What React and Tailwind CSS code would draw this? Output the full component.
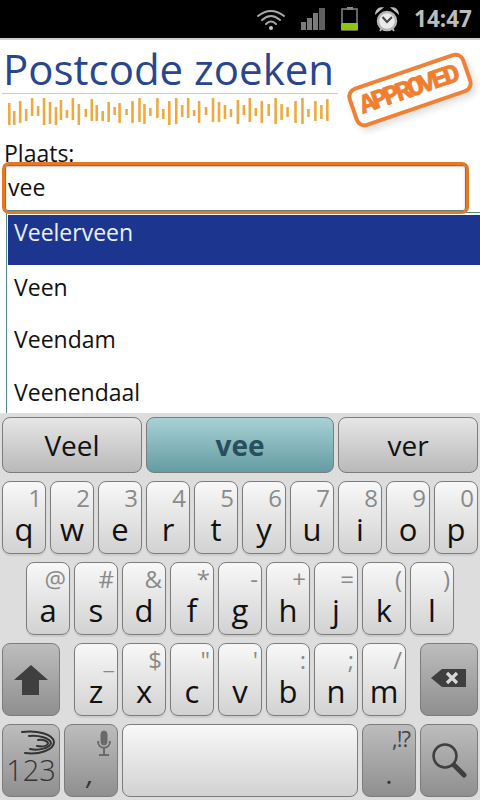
const FONT = { fontFamily: '"Open Sans","Noto Sans",sans-serif' };

const BARS = [
  [8,8,26],[13,16,18],[19,6,22],[25,14,12],[31,3,18],[37,11,10],[43,3,28],[49,7,22],[55,12,24],[60,5,20],[66,15,8],[72,3,22],[78,9,26],[85,14,8],[91,4,22],[96,10,16],[102,16,10],[108,7,20],[114,12,8],[119,8,20],[126,14,6],[132,6,22],[139,3,24],[144,9,20],[150,13,8],[157,3,20],[163,14,10],[169,6,26],[176,3,26],[182,10,12],[188,3,20],[194,15,6],[199,6,22],[206,12,8],[213,3,24],[219,7,20],[225,10,14],[231,14,8],[238,5,24],[244,10,10],[250,3,24],[256,13,8],[262,6,22],[269,9,12],[276,3,26],[282,9,16],[288,12,10],[296,6,22],[303,3,26],[309,14,8],[316,6,20],[322,10,14],[328,4,22],
];

function Barcode() {
  return (
    <svg width="330" height="28" viewBox="0 0 332 28" className="block">
      {BARS.map(([x, y, h], i) => (
        <rect key={i} x={x - 2} y={y - 2} width="2.6" height={h} fill="#efa93f" />
      ))}
    </svg>
  );
}

function StatusBar() {
  return (
    <div className="h-[40px] bg-black border-b-2 border-[#cfcfcf] flex items-center justify-end gap-[14px] pr-[8px] shrink-0">
      <svg width="30" height="24" viewBox="0 0 30 24" fill="none" stroke="#a9a9a9" strokeLinecap="round">
        <path d="M2 9 Q15 -1 28 9" strokeWidth="2" />
        <path d="M6 13 Q15 5 24 13" strokeWidth="2" />
        <path d="M10 17 Q15 12 20 17" strokeWidth="2" />
        <circle cx="15" cy="21" r="2" fill="#c8c8c8" stroke="none" />
      </svg>
      <svg width="26" height="24" viewBox="0 0 26 24" fill="#7b7b7b">
        <rect x="1" y="15" width="5" height="8" />
        <rect x="7" y="11" width="5" height="12" />
        <rect x="13" y="6" width="5" height="17" />
        <rect x="19" y="1" width="6" height="22" fill="#5f5f5f" />
      </svg>
      <svg width="20" height="26" viewBox="0 0 20 26">
        <rect x="7" y="1" width="6" height="3" fill="#8c8c8c" />
        <rect x="2" y="3" width="15" height="21" fill="none" stroke="#7d7d7d" strokeWidth="1.6" />
        <rect x="1" y="17" width="17" height="7" rx="1" fill="#8fc412" />
      </svg>
      <svg width="26" height="26" viewBox="0 0 26 26">
        <circle cx="13" cy="15" r="9" fill="#eaeaea" stroke="#b5b5b5" strokeWidth="2.5" />
        <path d="M8.5 11 L13 16 L18 11" fill="none" stroke="#444" strokeWidth="2" />
        <path d="M2 7 Q3 2 8 2 Z" fill="#bdbdbd" stroke="#bdbdbd" strokeWidth="1.5" />
        <path d="M24 7 Q23 2 18 2 Z" fill="#bdbdbd" stroke="#bdbdbd" strokeWidth="1.5" />
        <path d="M6 25 L8 22 M20 25 L18 22" stroke="#b5b5b5" strokeWidth="2" />
      </svg>
      <span className="text-[22.5px] leading-none font-bold text-[#bcbcbc]" style={FONT}>14:47</span>
    </div>
  );
}

function Header() {
  return (
    <div className="h-[98px] flex shrink-0 bg-white">
      <div className="w-[338px] pl-[3px] pt-[5px] shrink-0">
        <div className="text-[42px] leading-[48px] text-[#27468f] whitespace-nowrap" style={FONT}>
          Postcode zoeken
        </div>
        <div className="h-px bg-[#c5cadb] mb-[3px] -ml-[1px]" />
        <div className="-ml-[1px]"><Barcode /></div>
      </div>
      <div className="flex-1 flex items-center justify-center pt-[1px] pl-[2px]">
        <div className="w-[124px] h-[42px] -rotate-[19deg] border-[4px] border-[#ef8136] rounded-[10px] flex items-center justify-center text-[#ef7e2e] font-bold text-[27px] leading-none shadow-[2px_5px_6px_rgba(0,0,0,0.12)] [-webkit-text-stroke:0.7px_#ef7e2e]" style={{ fontFamily: '"Liberation Mono",monospace' }}>
          <span className="tracking-[-3.6px] pr-[4px]">APPROVED</span>
        </div>
      </div>
    </div>
  );
}

function Form() {
  const items = ['Veen', 'Veendam', 'Veenendaal'];
  return (
    <div className="flex-1 min-h-0 overflow-hidden bg-white" style={FONT}>
      <div className="text-[23px] leading-[32px] text-[#111] pl-[4px] h-[24px] -mt-[1px] mb-[1px]">Plaats:</div>
      <div className="relative z-10 ml-[2px] w-[467px] h-[52px] rounded-[7px] border-[3px] border-[#e8781f] bg-white">
        <div className="h-full border border-[#5f7f78] rounded-[3px] pl-[2px] flex items-center text-[23px] text-[#111] pb-[2px] shadow-[inset_0_1px_2px_rgba(0,0,0,0.25)]">
          vee
        </div>
      </div>
      <div className="-mt-[2px] ml-[6px] border-l border-t border-[#4d8a88] pt-[2px] pl-px">
        <div className="h-[50px] bg-[#1c368f] text-[#e8f0fb] text-[23px] pl-[6px] flex items-center pb-[15px]">Veelerveen</div>
        {items.map((t) => (
          <div key={t} className="h-[52.5px] text-[23px] text-[#111] pl-[6px] flex items-center pb-[9px]">{t}</div>
        ))}
      </div>
    </div>
  );
}

const KEY_BASE = 'rounded-[8px] border border-[#7c7c7c] shrink-0';
const LIGHT = 'bg-gradient-to-b from-[#f8f8f8] to-[#d2d2d2]';
const DARK = 'bg-gradient-to-b from-[#bdbdbd] to-[#8f8f8f]';

function Key({ letter, hint }) {
  return (
    <div className={`${KEY_BASE} ${LIGHT} w-[44px] h-[73px] flex flex-col shadow-[0_2px_1px_rgba(0,0,0,0.08)]`}>
      <div className="h-[30px] pr-[3px] pt-[1px] text-right text-[24px] leading-[29px] text-[#8a8a8a]">{hint}</div>
      <div className="text-center text-[31px] leading-[34px] text-[#111]">{letter}</div>
    </div>
  );
}

function Suggest({ children, active, w }) {
  return (
    <div className={`${KEY_BASE} h-[56px] flex items-center justify-center text-[28px] ${w} ${active ? 'bg-gradient-to-b from-[#a8d1d5] to-[#649ca3] border-[#5b8c92] text-[#274f5e] font-bold' : 'bg-gradient-to-b from-[#e6e6e6] to-[#b9b9b9] text-[#111]'}`}>
      {children}
    </div>
  );
}

function Row({ keys, hints }) {
  return keys.split('').map((k, i) => <Key key={k} letter={k} hint={hints[i]} />);
}

function Keyboard() {
  return (
    <div className="h-[387px] bg-[#dddddd] shrink-0 flex flex-col gap-[8px] px-[2px] pt-[4px]" style={FONT}>
      <div className="flex gap-[4px] h-[56px]">
        <Suggest w="w-[140px]">Veel</Suggest>
        <Suggest w="w-[188px]" active>vee</Suggest>
        <Suggest w="w-[140px]">ver</Suggest>
      </div>
      <div className="flex gap-[4px] h-[73px]">
        <Row keys="qwertyuiop" hints={['1','2','3','4','5','6','7','8','9','0']} />
      </div>
      <div className="flex gap-[4px] h-[73px] pl-[24px]">
        <Row keys="asdfghjkl" hints={['@','#','&','*','-','+','=','(',')']} />
      </div>
      <div className="flex gap-[4px] h-[73px]">
        <div className={`${KEY_BASE} ${DARK} w-[58px] h-[73px] mr-[10px] flex items-center justify-center`}>
          <svg width="36" height="32" viewBox="0 0 36 32"><path d="M18 1 L35 16 L26 16 L26 31 L9 31 L9 16 L1 16 Z" fill="#3f3f3f" /></svg>
        </div>
        <Row keys="zxcvbnm" hints={['_','$','"',"'",':',';','/']} />
        <div className={`${KEY_BASE} ${DARK} w-[58px] h-[73px] ml-[10px] flex items-start justify-center pt-[24px]`}>
          <svg width="36" height="20" viewBox="0 0 36 20">
            <path d="M0 10 L11 1 L35 1 L35 19 L11 19 Z" fill="#3f3f3f" />
            <path d="M16 5 L26 15 M26 5 L16 15" stroke="#d8d8d8" strokeWidth="3.2" />
          </svg>
        </div>
      </div>
      <div className="flex gap-[4px] h-[73px]">
        <div className={`${KEY_BASE} ${DARK} w-[58px] h-[73px] flex flex-col items-center pt-[5px]`}>
          <svg width="34" height="26" viewBox="0 0 34 26" fill="none" stroke="#333" strokeLinecap="round" className="ml-[13px]">
            <path d="M1 2 C16 0 32 4 33 12 C33 20 18 25 4 23" strokeWidth="2" />
            <path d="M8 6 C18 5 29 8 30 13 C29 18 18 21 9 19" strokeWidth="2" />
            <path d="M17 10 C22 9 27 11 27 13.5 C26 16 22 17 16 16" strokeWidth="2" />
          </svg>
          <div className="text-[29px] leading-[34px] text-[#333] -mt-[3px] font-light">123</div>
        </div>
        <div className={`${KEY_BASE} ${DARK} w-[54px] h-[73px] flex flex-col`}>
          <div className="h-[34px] flex justify-end pr-[5px] pt-[5px]">
            <svg width="16" height="28" viewBox="0 0 16 28" fill="none" stroke="#6a6a6a">
              <rect x="5" y="1" width="6" height="14" rx="3" fill="#6a6a6a" />
              <path d="M2 11 C2 20 14 20 14 11 M8 18 V24 M3 25 H13" strokeWidth="2" />
            </svg>
          </div>
          <div className="pl-[22px] text-[28px] leading-[28px] text-[#333] italic">,</div>
        </div>
        <div className={`${KEY_BASE} ${LIGHT} w-[236px] h-[73px]`} />
        <div className={`${KEY_BASE} ${DARK} w-[54px] h-[73px] flex flex-col`}>
          <div className="h-[36px] pr-[5px] pt-[2px] text-right text-[22px] leading-[22px] text-[#444] tracking-[-1px]">,!?</div>
          <div className="text-center text-[26px] leading-[26px] text-[#333]">.</div>
        </div>
        <div className={`${KEY_BASE} ${DARK} w-[58px] h-[73px] flex items-center justify-center pb-[2px]`}>
          <svg width="36" height="38" viewBox="0 0 36 38" fill="none" stroke="#3f3f3f">
            <circle cx="14" cy="15" r="11.5" strokeWidth="2.6" />
            <path d="M23 24 L33 34" strokeWidth="5" strokeLinecap="round" />
          </svg>
        </div>
      </div>
    </div>
  );
}

export default function App() {
  return (
    <div className="w-[480px] h-[800px] flex flex-col overflow-hidden bg-white">
      <StatusBar />
      <Header />
      <Form />
      <Keyboard />
    </div>
  );
}
